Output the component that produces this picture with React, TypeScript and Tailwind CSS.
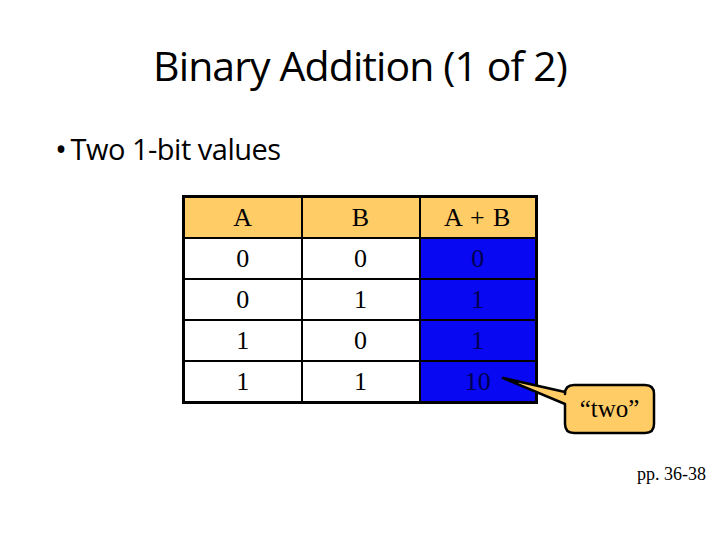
const rows: [string, string, string][] = [
  ['0', '0', '0'],
  ['0', '1', '1'],
  ['1', '0', '1'],
  ['1', '1', '10'],
]

export default function App() {
  return (
    <div className="relative w-[720px] h-[540px] bg-white overflow-hidden">
      <h1 className="pt-[41px] text-center text-[41px] leading-[48px] text-black font-['Open_Sans',sans-serif] tracking-[-0.9px]">
        Binary Addition (1 of 2)
      </h1>

      <div className="mt-[44px] ml-[55px] flex items-center gap-[4px] font-['Open_Sans',sans-serif] text-[29px] leading-[32px] tracking-[-0.5px] text-black">
        <span className="text-[32px]">•</span>
        <span>Two 1-bit values</span>
      </div>

      <table className="ml-[182px] mt-[30px] border-collapse border-[3px] border-black font-['Liberation_Serif',serif] text-[26px] text-black">
        <thead>
          <tr className="bg-[#ffcc66] h-[41px]">
            <th className="w-[118px] border-2 border-black font-normal">A</th>
            <th className="w-[118px] border-2 border-black font-normal">B</th>
            <th className="w-[117px] border-2 border-black font-normal tracking-[1px]">A + B</th>
          </tr>
        </thead>
        <tbody>
          {rows.map((r, i) => (
            <tr key={i} className="h-[41px]">
              <td className="border-2 border-black text-center">{r[0]}</td>
              <td className="border-2 border-black text-center">{r[1]}</td>
              <td className="border-2 border-black text-center bg-[#0808f2] text-[#000050]">{r[2]}</td>
            </tr>
          ))}
        </tbody>
      </table>

      {/* callout bubble */}
      <svg className="absolute left-0 top-0" width="720" height="540">
        <path
          d="M 574 385 L 645 385 Q 654 385 654 394 L 654 424 Q 654 433 645 433 L 574 433 Q 565 433 565 424 L 565 404 L 503 378 L 565 392 L 565 394 Q 565 385 574 385 Z"
          fill="#ffcc66"
          stroke="black"
          strokeWidth="2.5"
          strokeLinejoin="round"
        />
      </svg>
      <div className="absolute left-[565px] top-[385px] w-[89px] h-[48px] flex items-center justify-center font-['Liberation_Serif',serif] text-[25px] text-black">
        “two”
      </div>

      <div className="absolute left-[637px] top-[461px] font-['Liberation_Serif',serif] text-[18px] text-black">
        pp. 36-38
      </div>
    </div>
  )
}
